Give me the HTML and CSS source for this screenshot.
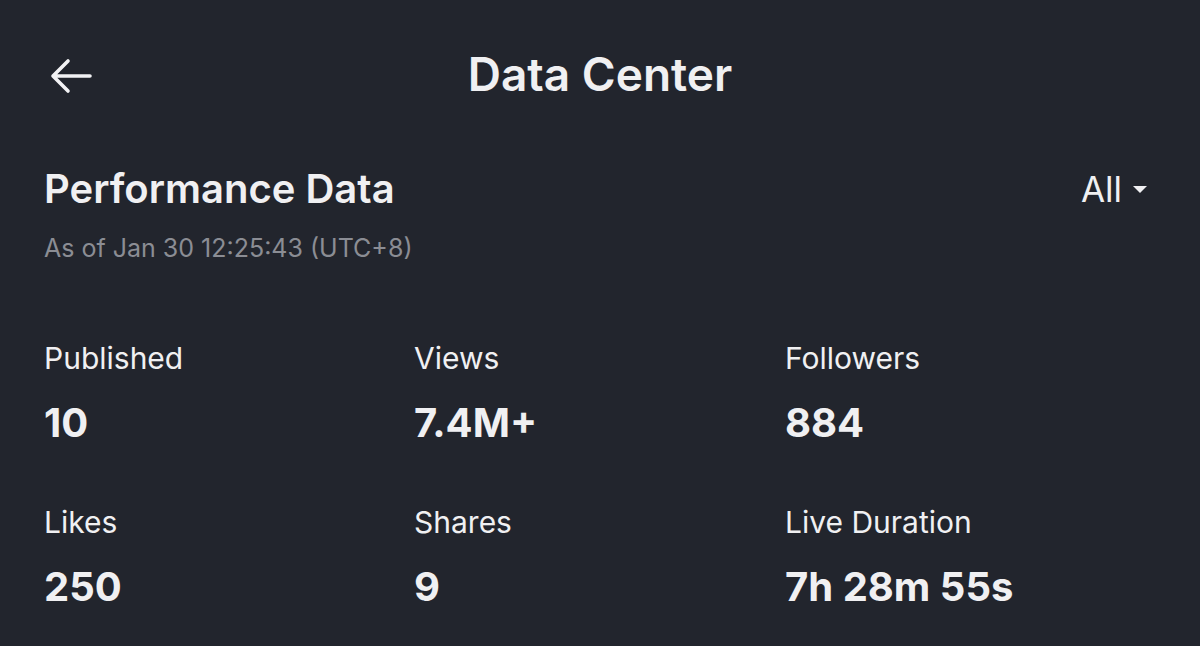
FILE: index.html
```html
<!DOCTYPE html>
<html>
<head>
<meta charset="utf-8">
<link rel="stylesheet" href="styles.css">
</head>
<body>
<div class="page">
  <header class="topbar">
    <button class="back" aria-label="Back">
      <svg width="44" height="36" viewBox="0 0 44 36"><path d="M20 3 L5 18 L20 33 M5 18 H42" fill="none" stroke="#f2f2f4" stroke-width="3.6" stroke-linecap="round" stroke-linejoin="round"/></svg>
    </button>
    <h1 class="title">Data Center</h1>
  </header>
  <section class="perf">
    <div class="perf-head">
      <div>
        <h2 class="perf-title">Performance Data</h2>
        <p class="asof">As of Jan 30 12:25:43 (UTC+8)</p>
      </div>
      <div class="filter">All <span class="caret"></span></div>
    </div>
    <div class="grid">
      <div class="stat"><div class="label">Published</div><div class="value">10</div></div>
      <div class="stat"><div class="label">Views</div><div class="value">7.4M+</div></div>
      <div class="stat"><div class="label">Followers</div><div class="value">884</div></div>
      <div class="stat"><div class="label">Likes</div><div class="value">250</div></div>
      <div class="stat"><div class="label">Shares</div><div class="value">9</div></div>
      <div class="stat"><div class="label">Live Duration</div><div class="value">7h 28m 55s</div></div>
    </div>
  </section>
</div>
</body>
</html>
```

FILE: styles.css
```css
html, body {
  margin: 0;
  padding: 0;
  background: #22252d;
}
body {
  font-family: Inter, "Noto Sans", sans-serif;
  color: #f0f0f2;
  width: 1200px;
  height: 646px;
  overflow: hidden;
}
.page {
  display: flex;
  flex-direction: column;
}
.topbar {
  position: relative;
  height: 150px;
  display: flex;
  align-items: center;
  justify-content: center;
}
.back {
  position: absolute;
  left: 48px;
  top: 58px;
  background: none;
  border: 0;
  padding: 0;
  display: flex;
}
.title {
  margin: 0 0 2px;
  font-size: 46px;
  font-weight: 600;
  letter-spacing: 0;
}
.perf {
  padding: 0 53px 0 44px;
}
.perf-head {
  display: flex;
  justify-content: space-between;
  align-items: flex-start;
}
.perf-title {
  margin: 12px 0 0;
  font-size: 40px;
  font-weight: 600;
  line-height: 54px;
}
.asof {
  margin: 14px 0 0;
  font-size: 25px;
  color: #8b8d94;
  line-height: 36px;
}
.filter {
  margin-top: 14px;
  font-size: 35px;
  display: flex;
  align-items: center;
  gap: 11px;
  line-height: 50px;
}
.caret {
  width: 0;
  height: 0;
  border-left: 7px solid transparent;
  border-right: 7px solid transparent;
  border-top: 7px solid #f0f0f2;
}
.grid {
  margin-top: 72px;
  display: grid;
  grid-template-columns: 370px 371px 1fr;
  row-gap: 54px;
}
.label {
  font-size: 30px;
  line-height: 40px;
}
.value {
  margin-top: 20px;
  font-size: 40px;
  font-weight: 700;
  line-height: 50px;
}
```
